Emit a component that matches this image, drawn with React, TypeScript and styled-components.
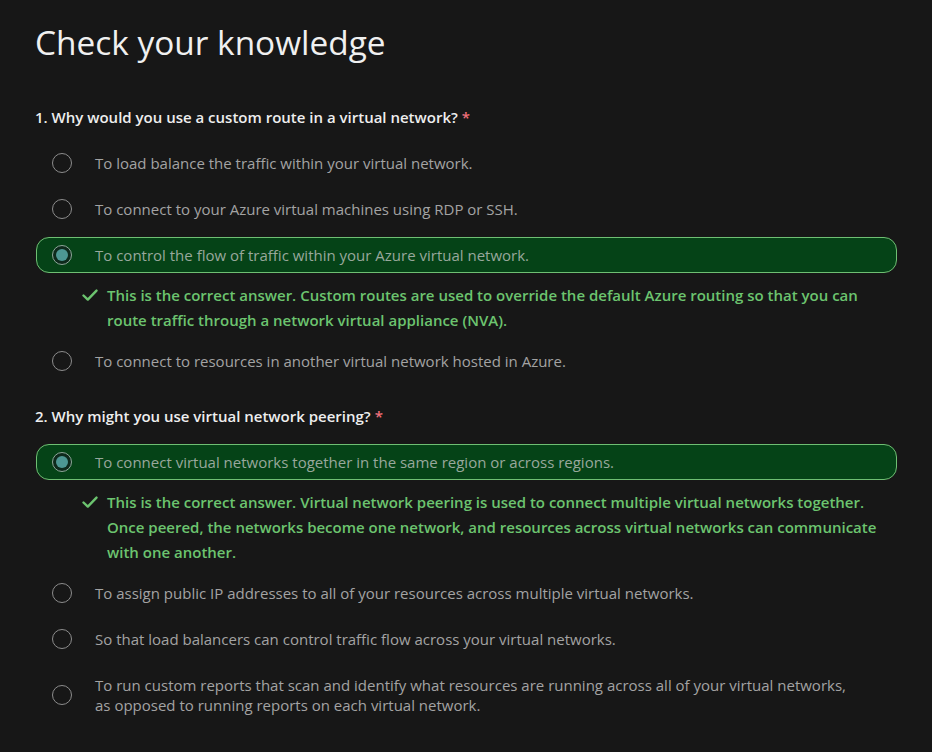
import React from "react";
import styled, { createGlobalStyle } from "styled-components";

const GlobalStyle = createGlobalStyle`
    html, body {
        margin: 0;
        padding: 0;
        background-color: #171717;
    }
    body {
        font-family: "Open Sans", "Noto Sans", sans-serif;
    }
`;

const Page = styled.div`
    background-color: #171717;
    min-height: 752px;
    padding: 18px 35px 20px 35px;
    box-sizing: border-box;
    color: #e6e6e6;
`;

const Title = styled.h1`
    margin: 0 0 41px 0;
    font-size: 33.4px;
    font-weight: 400;
    line-height: 48px;
    color: #f0f0f0;
`;

const QuestionBlock = styled.section`
    display: flex;
    flex-direction: column;
    margin-bottom: 27px;
`;

const QuestionText = styled.div`
    font-size: 15px;
    font-weight: 600;
    line-height: 20px;
    color: #eeeeee;
    margin-bottom: 18px;
`;

const Required = styled.span`
    color: #f1707b;
    margin-left: 4px;
`;

const OptionList = styled.div`
    display: flex;
    flex-direction: column;
    gap: 10px;
`;

const Option = styled.label<{ $selected?: boolean }>`
    display: flex;
    align-items: center;
    gap: 23px;
    padding: 7px 45px 7px 15px;
    margin-left: 1px;
    border-radius: 13px;
    border: 1px solid ${(p) => (p.$selected ? "#6fbf73" : "transparent")};
    background-color: ${(p) => (p.$selected ? "#054317" : "transparent")};
    font-size: 15px;
    line-height: 20px;
    color: ${(p) => (p.$selected ? "#98a89c" : "#a3a3a3")};
`;

const Radio = styled.span<{ $selected?: boolean }>`
    flex: none;
    width: 20px;
    height: 20px;
    border-radius: 50%;
    box-sizing: border-box;
    border: 1px solid ${(p) => (p.$selected ? "#8fa79a" : "#8c8c8c")};
    background-color: ${(p) => (p.$selected ? "#0e2a1c" : "transparent")};
    display: flex;
    align-items: center;
    justify-content: center;

    &::after {
        content: "";
        display: ${(p) => (p.$selected ? "block" : "none")};
        width: 12px;
        height: 12px;
        border-radius: 50%;
        background-color: #4d9793;
    }
`;

const Feedback = styled.div`
    display: flex;
    align-items: flex-start;
    gap: 9px;
    padding-left: 47px;
    padding-right: 10px;
    font-size: 15px;
    font-weight: 600;
    line-height: 25px;
    color: #6cc46f;
`;

const CheckIcon = styled.svg`
    flex: none;
    width: 16px;
    height: 16px;
    margin-top: 4px;
`;

type Question = {
    text: string;
    options: string[];
    selected: number;
    feedback: string;
};

const questions: Question[] = [
    {
        text: "1. Why would you use a custom route in a virtual network?",
        options: [
            "To load balance the traffic within your virtual network.",
            "To connect to your Azure virtual machines using RDP or SSH.",
            "To control the flow of traffic within your Azure virtual network.",
            "To connect to resources in another virtual network hosted in Azure.",
        ],
        selected: 2,
        feedback:
            "This is the correct answer. Custom routes are used to override the default Azure routing so that you can route traffic through a network virtual appliance (NVA).",
    },
    {
        text: "2. Why might you use virtual network peering?",
        options: [
            "To connect virtual networks together in the same region or across regions.",
            "To assign public IP addresses to all of your resources across multiple virtual networks.",
            "So that load balancers can control traffic flow across your virtual networks.",
            "To run custom reports that scan and identify what resources are running across all of your virtual networks, as opposed to running reports on each virtual network.",
        ],
        selected: 0,
        feedback:
            "This is the correct answer. Virtual network peering is used to connect multiple virtual networks together. Once peered, the networks become one network, and resources across virtual networks can communicate with one another.",
    },
];

function Check() {
    return (
        <CheckIcon viewBox="0 0 16 16">
            <path d="M1.5 8.5 L5.8 12.6 L14.5 3.6" fill="none" stroke="#6cc46f" strokeWidth="2.4" strokeLinecap="round" strokeLinejoin="round" />
        </CheckIcon>
    );
}

export default function App() {
    return (
        <>
            <GlobalStyle />
            <Page>
                <Title>Check your knowledge</Title>
                {questions.map((q) => (
                    <QuestionBlock key={q.text}>
                        <QuestionText>
                            {q.text}
                            <Required>*</Required>
                        </QuestionText>
                        <OptionList>
                            {q.options.map((opt, i) => (
                                <React.Fragment key={opt}>
                                    <Option $selected={i === q.selected}>
                                        <Radio $selected={i === q.selected} />
                                        <span>{opt}</span>
                                    </Option>
                                    {i === q.selected && (
                                        <Feedback>
                                            <Check />
                                            <span>{q.feedback}</span>
                                        </Feedback>
                                    )}
                                </React.Fragment>
                            ))}
                        </OptionList>
                    </QuestionBlock>
                ))}
            </Page>
        </>
    );
}
